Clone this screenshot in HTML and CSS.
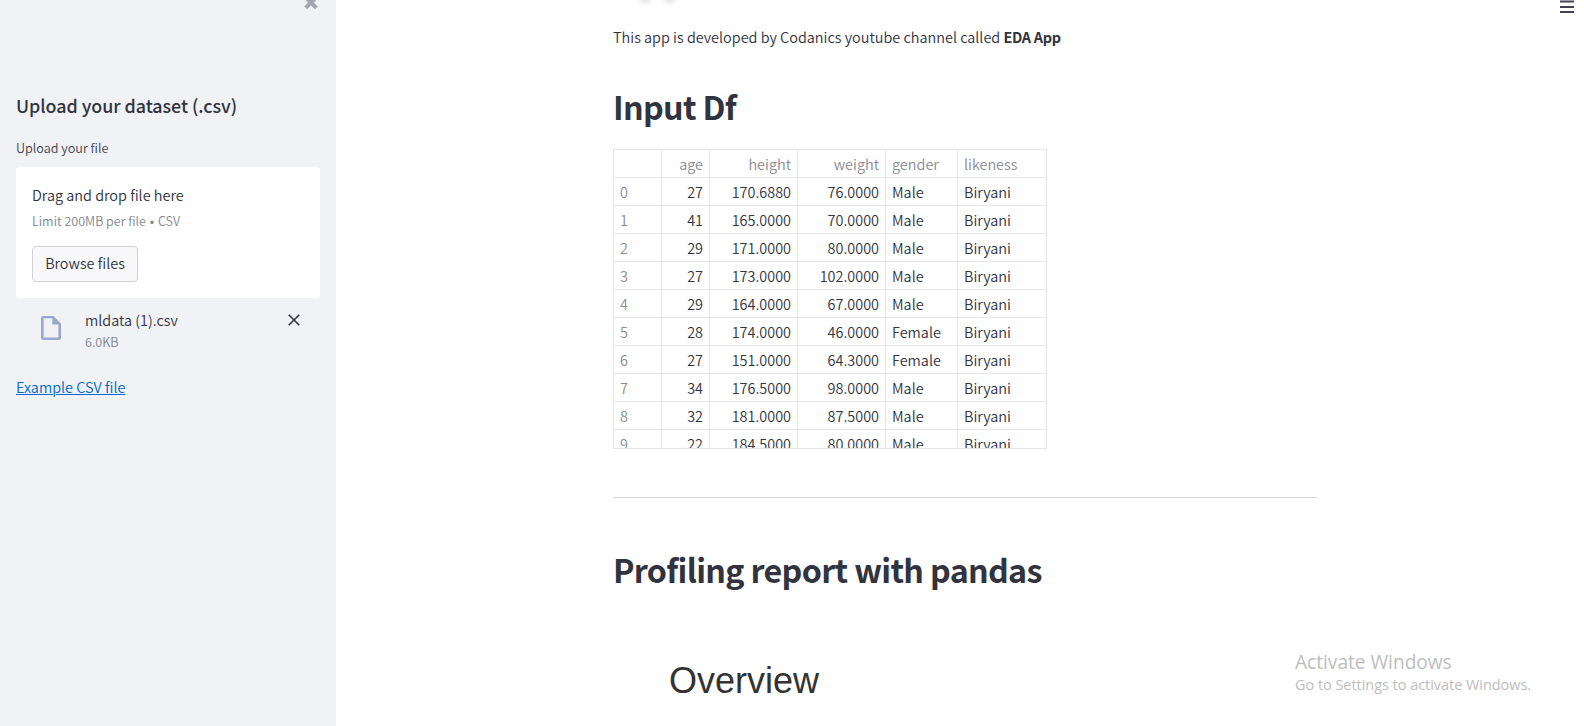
FILE: index.html
```html
<!DOCTYPE html>
<html lang="en">
<head>
<meta charset="utf-8">
<title>EDA App</title>
<link rel="stylesheet" href="styles.css">
</head>
<body>
<div class="app">
  <aside class="sidebar">
    <svg class="collapse" width="14" height="14" viewBox="0 0 14 14"><path d="M1.7 1.3L12.3 11.9M12.3 1.3L1.7 11.9" stroke="#a4a5ac" stroke-width="4"/></svg>
    <h2 class="side-title">Upload your dataset (.csv)</h2>
    <div class="label">Upload your file</div>
    <div class="dropzone">
      <div class="drop-text">Drag and drop file here</div>
      <div class="drop-limit">Limit 200MB per file <span class="dot">•</span> CSV</div>
      <button class="browse">Browse files</button>
    </div>
    <div class="file">
      <svg class="file-icon" width="20" height="24" viewBox="0 0 20 24"><path fill="#9aa9c9" fill-rule="evenodd" d="M2.2 0H12.5L20 7.6V21.6A2.2 2.2 0 0 1 17.8 24H2.2A2.2 2.2 0 0 1 0 21.8V2.2A2.2 2.2 0 0 1 2.2 0ZM2.6 2.3V21.6H17.4V8.4H11.3V2.3Z"/></svg>
      <div class="file-info">
        <div class="file-name">mldata (1).csv</div>
        <div class="file-size">6.0KB</div>
      </div>
      <svg class="remove" width="12" height="12" viewBox="0 0 12 12"><path d="M.7 .7L11.3 11.3M11.3 .7L.7 11.3" stroke="#31333f" stroke-width="1.6"/></svg>
    </div>
    <a class="example">Example CSV file</a>
  </aside>
  <main class="main">
    <div class="title-shadow"><i></i><i></i></div>
    <svg class="menu" width="14" height="14" viewBox="0 0 14 14"><path d="M0 1.5H14M0 7H14M0 12H14" stroke="#42434f" stroke-width="2"/></svg>
    <p class="intro">This app is developed by Codanics youtube channel called <b>EDA App</b></p>
    <h1 class="heading">Input Df</h1>
    <div class="frame">
      <table class="grid">
        <colgroup><col class="c48"><col class="c48"><col class="c88"><col class="c88"><col class="c72"><col class="c89"></colgroup>
        <tr><th></th><th class="num">age</th><th class="num">height</th><th class="num">weight</th><th>gender</th><th>likeness</th></tr>
        <tr><th>0</th><td class="num">27</td><td class="num">170.6880</td><td class="num">76.0000</td><td>Male</td><td>Biryani</td></tr>
        <tr><th>1</th><td class="num">41</td><td class="num">165.0000</td><td class="num">70.0000</td><td>Male</td><td>Biryani</td></tr>
        <tr><th>2</th><td class="num">29</td><td class="num">171.0000</td><td class="num">80.0000</td><td>Male</td><td>Biryani</td></tr>
        <tr><th>3</th><td class="num">27</td><td class="num">173.0000</td><td class="num">102.0000</td><td>Male</td><td>Biryani</td></tr>
        <tr><th>4</th><td class="num">29</td><td class="num">164.0000</td><td class="num">67.0000</td><td>Male</td><td>Biryani</td></tr>
        <tr><th>5</th><td class="num">28</td><td class="num">174.0000</td><td class="num">46.0000</td><td>Female</td><td>Biryani</td></tr>
        <tr><th>6</th><td class="num">27</td><td class="num">151.0000</td><td class="num">64.3000</td><td>Female</td><td>Biryani</td></tr>
        <tr><th>7</th><td class="num">34</td><td class="num">176.5000</td><td class="num">98.0000</td><td>Male</td><td>Biryani</td></tr>
        <tr><th>8</th><td class="num">32</td><td class="num">181.0000</td><td class="num">87.5000</td><td>Male</td><td>Biryani</td></tr>
        <tr><th>9</th><td class="num">22</td><td class="num">184.5000</td><td class="num">80.0000</td><td>Male</td><td>Biryani</td></tr>
      </table>
    </div>
    <hr class="rule">
    <h1 class="heading">Profiling report with pandas</h1>
    <h2 class="overview">Overview</h2>
  </main>
  <div class="watermark">
    <div class="wm-title">Activate Windows</div>
    <div class="wm-text">Go to Settings to activate Windows.</div>
  </div>
</div>
</body>
</html>
```
FILE: styles.css
```css
* { box-sizing: border-box; }
body {
  margin: 0;
  background: #fff;
  color: #31333f;
  font-family: "Noto Sans CJK SC", "Noto Sans CJK JP", sans-serif;
  font-size: 14.44px;
  font-weight: 350;
  line-height: 26px;
}
h1, h2, p { margin: 0; }
.app { position: relative; display: flex; height: 726px; overflow: hidden; }

.sidebar { position: relative; width: 336px; padding: 91px 16px 0; background: #f0f2f6; }
.collapse { position: absolute; left: 304px; top: -4px; }
.side-title { font-size: 17.9px; font-weight: 500; line-height: 28px; letter-spacing: -0.05px; }
.label { margin-top: 19px; font-size: 12.64px; line-height: 20px; color: #42444f; }
.dropzone { height: 131px; margin-top: 9px; padding: 15px 16px; background: #fff; border-radius: 4px; }
.drop-text { line-height: 26px; }
.drop-limit { margin-top: 3px; font-size: 12.54px; line-height: 20px; color: #85868e; }
.dot { font-family: Lato, sans-serif; font-size: 11px; line-height: 1; }
.browse {
  display: block;
  width: 106px;
  height: 36px;
  margin-top: 15px;
  padding: 0 0 2px;
  border: 1px solid #cfd0d4;
  border-radius: 4px;
  background: #f9f9fb;
  color: #31333f;
  font: inherit;
  line-height: 32px;
}
.file { display: flex; align-items: flex-start; padding: 9px 20px 0 25px; height: 68px; }
.file-icon { margin-top: 9px; }
.file-info { flex: 1; margin-left: 24px; }
.file-name { line-height: 26px; }
.file-size { font-size: 12.64px; line-height: 18px; color: #82848d; }
.remove { margin-top: 7px; }
.example { display: block; margin-top: 8px; color: #0068c9; text-decoration: underline; text-underline-offset: 1px; text-decoration-thickness: 1px; }

.main { position: relative; flex: 1; padding: 24px 0 0 277px; }
.title-shadow { position: absolute; left: 305px; top: -6px; display: flex; gap: 17px; }
.title-shadow i { width: 8px; height: 8px; border-radius: 4px; background: #ccc; filter: blur(3px); }
.menu { position: absolute; right: 10px; top: 0; }
.intro b { font-weight: 600; letter-spacing: -0.3px; }
.heading { margin-top: 34px; font-size: 32.25px; font-weight: 600; line-height: 44px; letter-spacing: -0.67px; }
.frame { width: 434px; height: 300px; margin-top: 21px; overflow: hidden; border: 1px solid #e6e6e8; }
.grid { width: 434px; margin: -1px 0 0 -1px; table-layout: fixed; border-collapse: collapse; }
.c48 { width: 48px; }
.c72 { width: 72px; }
.c88 { width: 88px; }
.c89 { width: 89px; }
.grid th, .grid td {
  height: 28px;
  padding: 2px 6px 1px;
  border: 1px solid #e6e6e8;
  line-height: 24px;
  font-weight: inherit;
  text-align: left;
  white-space: nowrap;
}
.grid th { color: #8b8c94; }
.grid .num { text-align: right; }
.rule { width: 704px; height: 1px; margin: 48px 0 0; border: 0; background: #d3d4d7; }
.rule + .heading { margin-top: 49px; }
.overview { margin: 70px 0 0 56px; font: 400 36px/40px "Liberation Sans", Arial, sans-serif; color: #333; }

.watermark { position: absolute; left: 1295px; top: 649px; color: #bdbdbd; font-family: "Open Sans", sans-serif; font-weight: 400; white-space: nowrap; }
.wm-title { font-size: 19.1px; line-height: 26px; }
.wm-text { font-size: 14.42px; line-height: 20px; }
```
